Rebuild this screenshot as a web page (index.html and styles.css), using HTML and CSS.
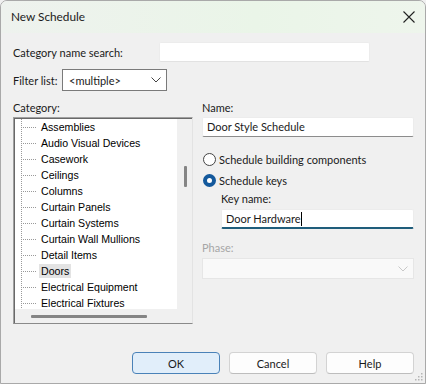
FILE: index.html
```html
<!DOCTYPE html>
<html lang="en">
  <head>
    <meta charset="UTF-8" />
    <title>New Schedule</title>
    <link rel="stylesheet" href="styles.css">
  </head>
  <body>
    <div class="window">
      <!-- Title bar -->
      <div class="titlebar">
        <span class="title">New Schedule</span>
        <svg class="close" width="12" height="12" viewBox="0 0 12 12">
          <path d="M0.5 0.5 L11.5 11.5 M11.5 0.5 L0.5 11.5" stroke="#222" stroke-width="1.1" fill="none" />
        </svg>
      </div>

      <div class="content">
        <div class="search-row">
          <label class="search-label">Category name search:</label>
          <div class="text-input search-input"></div>
        </div>

        <div class="filter-row">
          <label class="filter-label">Filter list:</label>
          <div class="select filter-select">
            <span>&lt;multiple&gt;</span>
            <svg width="10" height="6" viewBox="0 0 10 6"><path d="M0.5 0.5 L5 5 L9.5 0.5" stroke="#444" fill="none" /></svg>
          </div>
        </div>

        <div class="columns">
          <!-- Category tree -->
          <div class="left-col">
            <div class="field-label">Category:</div>
            <div class="listbox">
              <ul class="tree">
                <li><span>Assemblies</span></li>
                <li><span>Audio Visual Devices</span></li>
                <li><span>Casework</span></li>
                <li><span>Ceilings</span></li>
                <li><span>Columns</span></li>
                <li><span>Curtain Panels</span></li>
                <li><span>Curtain Systems</span></li>
                <li><span>Curtain Wall Mullions</span></li>
                <li><span>Detail Items</span></li>
                <li><span class="selected">Doors</span></li>
                <li><span>Electrical Equipment</span></li>
                <li><span>Electrical Fixtures</span></li>
              </ul>
              <div class="vscroll"><div class="vthumb"></div></div>
              <div class="hscroll"><div class="hthumb"></div></div>
              <div class="corner"></div>
            </div>
          </div>

          <!-- Schedule settings -->
          <div class="right-col">
            <div class="field-label">Name:</div>
            <div class="text-input name-input">Door Style Schedule</div>

            <div class="radio-row first-radio">
              <span class="radio"></span>
              <span>Schedule building components</span>
            </div>
            <div class="radio-row">
              <span class="radio checked"></span>
              <span>Schedule keys</span>
            </div>

            <div class="key-block">
              <div class="field-label key-label">Key name:</div>
              <div class="text-input key-input">Door Hardware<span class="caret"></span></div>
            </div>

            <div class="field-label phase-label">Phase:</div>
            <div class="select phase-select">
              <span></span>
              <svg width="10" height="6" viewBox="0 0 10 6"><path d="M0.5 0.5 L5 5 L9.5 0.5" stroke="#c8c8c8" fill="none" /></svg>
            </div>
          </div>
        </div>

        <div class="buttons">
          <button class="btn default">OK</button>
          <button class="btn">Cancel</button>
          <button class="btn">Help</button>
        </div>
      </div>

      <svg class="grip" width="9" height="9" viewBox="0 0 9 9">
        <rect x="7" y="1" width="1.5" height="1.5" fill="#b5b5b5" />
        <rect x="4" y="4" width="1.5" height="1.5" fill="#b5b5b5" />
        <rect x="7" y="4" width="1.5" height="1.5" fill="#b5b5b5" />
        <rect x="1" y="7" width="1.5" height="1.5" fill="#b5b5b5" />
        <rect x="4" y="7" width="1.5" height="1.5" fill="#b5b5b5" />
        <rect x="7" y="7" width="1.5" height="1.5" fill="#b5b5b5" />
      </svg>
    </div>
  </body>
</html>
```

FILE: styles.css
```css
/* General Styles */
* {
  box-sizing: border-box;
}

body {
  margin: 0;
  padding: 0;
  background: #f0f0f0;
  font-family: "Lato", "Noto Sans", sans-serif;
  font-size: 11px;
  color: #1a1a1a;
}

.window {
  position: relative;
  width: 426px;
  height: 384px;
  border: 1px solid #a9a9a9;
  border-radius: 7px 7px 0 0;
  background: #f0f0f0;
  overflow: hidden;
}

/* Title bar */
.titlebar {
  height: 32px;
  display: flex;
  align-items: center;
  justify-content: space-between;
  padding: 0 10px 0 10px;
  background: linear-gradient(to right, #eef2ee, #eaf5e8 60%, #eef5ec);
}

.title {
  font-size: 11.8px;
  padding-bottom: 1px;
}

/* Content */
.content {
  padding: 0 11px 0 12px;
}

.search-row,
.filter-row {
  display: flex;
  align-items: center;
}

.search-row label,
.filter-row label {
  flex-shrink: 0;
  white-space: nowrap;
}

.search-row {
  margin-top: 9px;
}

.search-label {
  width: 146px;
}

.text-input {
  height: 20px;
  background: #fff;
  border: 1px solid #ececec;
  border-bottom-color: #8c8c8c;
  border-radius: 2px;
  padding: 0 4px;
  line-height: 18px;
  white-space: nowrap;
}

.search-input {
  width: 211px;
  border-bottom-color: #e2e2e2;
}

.filter-row {
  margin-top: 7px;
}

.filter-label {
  width: 49px;
}

.select {
  height: 22px;
  display: flex;
  align-items: center;
  justify-content: space-between;
  background: #fff;
  border: 1px solid #7a7a7a;
  padding: 0 5px 0 6px;
}

.filter-select {
  width: 105px;
}

.columns {
  display: flex;
  gap: 9px;
  margin-top: 9px;
}

.field-label {
  height: 15px;
  line-height: 15px;
  margin-bottom: 2px;
}

/* Category list */
.left-col {
  width: 181px;
}

.listbox {
  height: 207px;
  display: grid;
  grid-template-columns: 1fr 15px;
  grid-template-rows: 1fr 14px;
  border: 1px solid #a0a0a0;
  border-right-color: #e3e3e3;
  border-bottom-color: #8a8a8a;
  box-shadow: inset 1px 1px 0 #696969;
  padding: 1px 0 0 1px;
  background: #f0f0f0;
}

.tree {
  list-style: none;
  margin: 0;
  padding: 0;
  background: #fff;
  overflow: hidden;
  font-family: "Liberation Sans", Arial, sans-serif;
  font-size: 10.6px;
  color: #000;
}

.tree li {
  height: 16px;
  line-height: 16px;
  padding-left: 24px;
  white-space: nowrap;
  background-image:
    repeating-linear-gradient(to bottom, #9a9a9a 0 1px, transparent 1px 2px),
    repeating-linear-gradient(to right, #9a9a9a 0 1px, transparent 1px 2px);
  background-size: 1px 100%, 16px 1px;
  background-position: 6px 0, 6px 8px;
  background-repeat: no-repeat;
}

.tree li span {
  padding: 1px 2px;
}

.tree .selected {
  background: #e3e3e3;
}

.vscroll {
  padding: 47px 0 0 7px;
}

.vthumb {
  width: 3px;
  height: 21px;
  background: #858585;
  border-radius: 1px;
}

.hscroll {
  padding: 6px 0 0 16px;
}

.hthumb {
  width: 116px;
  height: 3px;
  background: #858585;
  border-radius: 1px;
}

/* Right column */
.right-col {
  width: 212px;
}

.name-input {
  width: 212px;
}

.radio-row {
  display: flex;
  align-items: center;
  height: 16px;
  gap: 3px;
}

.first-radio {
  margin-top: 14px;
  margin-bottom: 5px;
}

.radio {
  width: 13px;
  height: 13px;
  border-radius: 50%;
  border: 1px solid #444;
  background: #fff;
  margin-left: 1px;
}

.radio.checked {
  border: 4px solid #14599c;
  background: #fff;
}

.key-block {
  padding-left: 19px;
}

.key-label {
  margin-top: 3px;
  margin-bottom: 3px;
}

.key-input {
  width: 193px;
  border-bottom: 2px solid #1f5d7b;
  line-height: 17px;
}

.caret {
  display: inline-block;
  width: 1px;
  height: 14px;
  background: #000;
  vertical-align: -3px;
}

.phase-label {
  margin-top: 11px;
  margin-bottom: 3px;
  color: #a6a6a6;
}

.phase-select {
  width: 212px;
  height: 21px;
  background: #f9f9f9;
  border-color: #e6e6e6;
}

/* Buttons */
.buttons {
  display: flex;
  justify-content: flex-end;
  gap: 9px;
  margin-top: 28px;
}

.btn {
  width: 88px;
  height: 22px;
  font-family: "Lato", "Noto Sans", sans-serif;
  font-size: 11px;
  background: #fdfdfd;
  border: 1px solid #d3d3d3;
  border-bottom-color: #bdbdbd;
  border-radius: 4px;
  padding: 0;
  color: #1a1a1a;
}

.btn.default {
  background: #e1eefa;
  border-color: #4a82b8;
}

.grip {
  position: absolute;
  right: 2px;
  bottom: 2px;
}
```
